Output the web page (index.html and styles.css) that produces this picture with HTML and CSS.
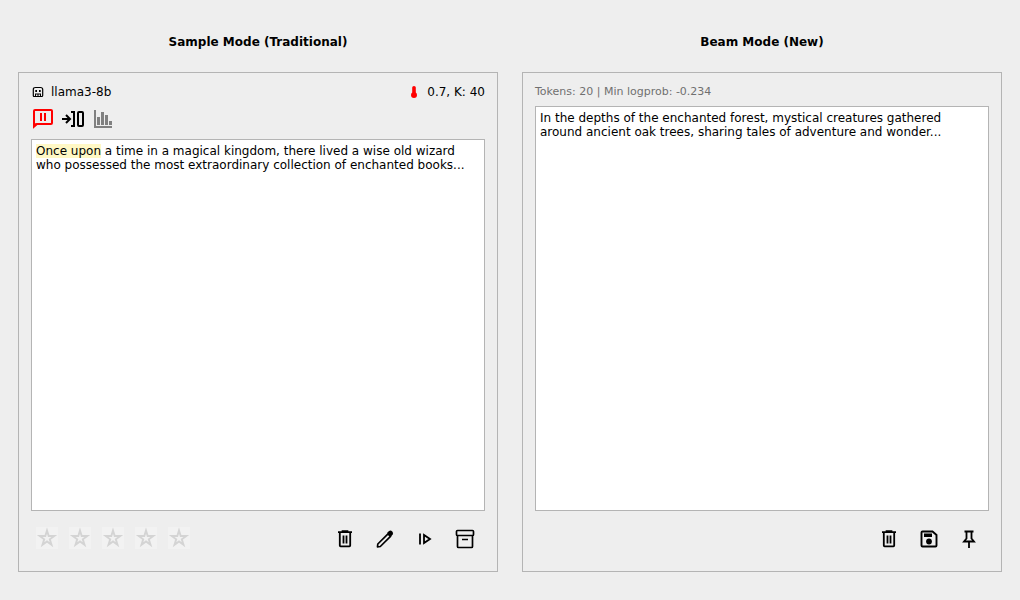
FILE: index.html
```html
<!DOCTYPE html>
<html lang="en">
<head>
<meta charset="utf-8">
<title>Sample Mode and Beam Mode</title>
<link rel="stylesheet" href="styles.css">
</head>
<body>
<svg class="defs" aria-hidden="true">
  <symbol id="star" viewBox="0 0 22 22"><path d="M11 3.500l1.700 5.500h5.600l-4.500 3.300 1.700 5.500-4.500-3.400-4.500 3.400 1.700-5.500L3.700 9h5.600z" fill="none" stroke="currentColor" stroke-width="1.900"/></symbol>
  <symbol id="trash" viewBox="0 0 24 24"><path d="M5 5.200h14M9.500 5V4h5v1" fill="none" stroke="currentColor" stroke-width="1.700"/><path d="M6.800 6v12.500q0 .8.800.8h8.800q.8 0 .8-.8V6M10.500 8.500v8M13.500 8.500v8" fill="none" stroke="currentColor" stroke-width="1.800"/></symbol>
</svg>
<main class="modes">
  <section class="mode">
    <h2 class="mode-title">Sample Mode (Traditional)</h2>
    <div class="panel">
      <div class="info">
        <span class="info-item">
          <svg class="robot" viewBox="0 0 12 12"><path d="M3.500 1.500h5q2.200 0 2.200 2v6q0 1-1 1H2.300q-1 0-1-1v-6q0-2 2.200-2z" fill="none" stroke="#000" stroke-width="1.200"/><path d="M3.300 4h1.700v2H3.300zM7 4h1.700v2H7zM3 7.500h6v1H3zM3 8h1v2H3zM5.500 8h1v2h-1zM8 8h1v2H8z"/></svg>
          llama3-8b
        </span>
        <span class="info-item heat">
          <svg class="thermo" viewBox="0 0 8 14"><path d="M2.200 2.500Q2.200 1 4 1t1.800 1.500V7.500Q7 8.400 7 10q0 2.900-3 2.900T1 10q0-1.600 1.200-2.500z" fill="#f00"/></svg>
          0.7, K: 40
        </span>
      </div>
      <div class="flags">
        <svg class="icon" viewBox="0 0 24 24"><path d="M3 20.500V5q0-1 1-1h16q1 0 1 1v12q0 1-1 1H6z" fill="none" stroke="#f00" stroke-width="2"/><path d="M2 17v5.500l5-5zM9 7h2v8H9zM13 7h2v8h-2z" fill="#f00"/></svg>
        <svg class="icon" viewBox="0 0 24 24"><path d="M1 13h7M5 9l4 4-4 4M10 6h3v14h-3M17 7v12q0 1 1 1h3q1 0 1-1V7q0-1-1-1h-3q-1 0-1 1z" fill="none" stroke="#000" stroke-width="2"/></svg>
        <svg class="icon" viewBox="0 0 24 24"><path d="M3 4h2v16h16v2H3zM6 11h3v8H6zM10 6h3v13h-3zM14 9h3v10h-3zM18 15h3v4h-3z" fill="#808080"/></svg>
      </div>
      <div class="text-box" role="textbox" aria-multiline="true" aria-label="Sample text" contenteditable="true" spellcheck="false"><mark>Once upon</mark> a time in a magical kingdom, there lived a wise old wizard who possessed the most extraordinary collection of enchanted books...</div>
      <div class="actions">
        <div class="rating">
          <button class="star" aria-label="1 star"><svg><use href="#star"/></svg></button>
          <button class="star" aria-label="2 stars"><svg><use href="#star"/></svg></button>
          <button class="star" aria-label="3 stars"><svg><use href="#star"/></svg></button>
          <button class="star" aria-label="4 stars"><svg><use href="#star"/></svg></button>
          <button class="star" aria-label="5 stars"><svg><use href="#star"/></svg></button>
        </div>
        <div class="tools">
          <button class="tool" aria-label="Delete"><svg class="icon"><use href="#trash"/></svg></button>
          <button class="tool" aria-label="Edit"><svg class="icon" viewBox="0 0 24 24"><path d="M4.800 17L15 6.800l2.500 2.500L7.300 19.500l-2.800.3z" fill="none" stroke="currentColor" stroke-width="1.700" stroke-linejoin="round"/><path d="M14 6l2-1.900q1.700-1.100 3.200.3 1.600 1.600.5 3.200L18 9.500z"/></svg></button>
          <button class="tool" aria-label="Continue"><svg class="icon" viewBox="0 0 24 24"><path d="M7 6.500v11M11 8v8l6-4z" fill="none" stroke="currentColor" stroke-width="1.800"/></svg></button>
          <button class="tool" aria-label="Archive"><svg class="icon" viewBox="0 0 24 24"><path d="M4.500 3.500h15q1 0 1 1v3q0 1-1 1h-15q-1 0-1-1v-3q0-1 1-1zM4.500 8.500v11q0 1 1 1h13q1 0 1-1v-11M9 12.500h6" fill="none" stroke="currentColor" stroke-width="1.700"/></svg></button>
        </div>
      </div>
    </div>
  </section>
  <section class="mode">
    <h2 class="mode-title">Beam Mode (New)</h2>
    <div class="panel">
      <div class="info stats">Tokens: 20 | Min logprob: -0.234</div>
      <textarea class="text-box" aria-label="Beam text" spellcheck="false">In the depths of the enchanted forest, mystical creatures gathered around ancient oak trees, sharing tales of adventure and wonder...</textarea>
      <div class="actions">
        <div class="tools">
          <button class="tool" aria-label="Delete"><svg class="icon"><use href="#trash"/></svg></button>
          <button class="tool" aria-label="Save"><svg class="icon" viewBox="0 0 24 24"><path d="M5.500 4.500h10L19.500 8v10.500q0 1-1 1h-13q-1 0-1-1v-13q0-1 1-1z" fill="none" stroke="currentColor" stroke-width="1.900"/><path d="M7 6.500h8V10H7z"/><circle cx="12" cy="14.500" r="2.900"/></svg></button>
          <button class="tool" aria-label="Pin"><svg class="icon" viewBox="0 0 24 24"><path d="M7.500 4.500h9M9.500 4v7.500L7 14.500h10L14.500 11.500V4M12 14.500V21" fill="none" stroke="currentColor" stroke-width="1.800"/></svg></button>
        </div>
      </div>
    </div>
  </section>
</main>
</body>
</html>
```
FILE: styles.css
```css
* {
  box-sizing: border-box;
}

body {
  margin: 0;
  background: #eee;
  color: #000;
  font: 12px/16px "DejaVu Sans", sans-serif;
}

.defs {
  position: absolute;
  width: 0;
  height: 0;
}

.modes {
  display: grid;
  grid-template-columns: repeat(2, minmax(0, 1fr));
  gap: 24px;
  min-height: 100vh;
  padding: 34px 18px 28px;
}

.mode {
  display: flex;
  flex-direction: column;
  gap: 22px;
}

.mode-title {
  margin: 0;
  font-size: 12px;
  font-weight: bold;
  text-align: center;
}

.panel {
  flex: 1;
  display: flex;
  flex-direction: column;
  padding: 11px 12px 16px;
  border: 1px solid #b4b4b4;
}

.info {
  display: flex;
  justify-content: space-between;
}

.stats {
  margin-bottom: 6px;
  color: #707070;
  font-size: 11px;
}

.info-item {
  display: flex;
  align-items: center;
  gap: 7px;
  padding-left: 1px;
}

.robot {
  width: 12px;
  height: 12px;
}

.heat {
  gap: 9px;
}

.thermo {
  width: 8px;
  height: 14px;
}

.flags {
  display: flex;
  gap: 6px;
  margin: 6px 0 9px;
}

.icon {
  display: block;
  width: 24px;
  height: 24px;
}

.text-box {
  flex: 1;
  display: block;
  width: 100%;
  margin: 0;
  padding: 4px;
  border: 1px solid #b4b4b4;
  border-radius: 0;
  outline: none;
  background: #fff;
  color: #000;
  font: 12px/14px "DejaVu Sans", sans-serif;
  resize: none;
}

mark {
  background: #fff8c5;
  color: inherit;
}

.actions {
  display: flex;
  align-items: center;
  justify-content: space-between;
  margin-top: 12px;
  padding: 0 4px 0 5px;
}

.rating {
  display: flex;
  gap: 11px;
  padding-bottom: 2px;
}

.tools {
  display: flex;
  gap: 8px;
  margin-left: auto;
}

.star,
.tool {
  display: flex;
  align-items: center;
  justify-content: center;
  padding: 0;
  border: 0;
  background: none;
  color: #000;
}

.star {
  width: 22px;
  height: 22px;
  background: #f2f2f2;
  color: #d4d4d4;
}

.star svg {
  width: 22px;
  height: 22px;
}

.tool {
  width: 32px;
  height: 32px;
}
```
